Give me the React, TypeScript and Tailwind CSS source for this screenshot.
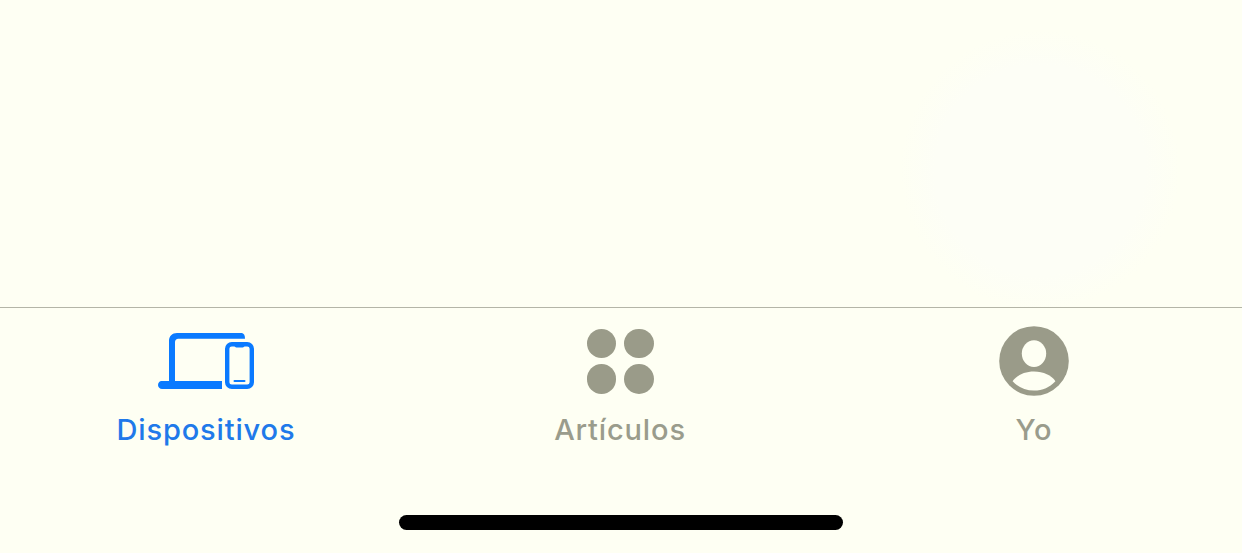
import React from 'react';

const DevicesIcon = () => (
  <svg width="96" height="56" viewBox="0 0 96 56" fill="none">
    <path d="M84 0H19C14.2 0 11 3.2 11 8V48H17V9C17 7 18.4 5.7 20.3 5.7H87C87 2.5 86 0.5 84 0Z" fill="#0a7aff" />
    <path d="M3.5 48H64V56H4C1.8 56 0 54.2 0 52C0 49.8 1.5 48 3.5 48Z" fill="#0a7aff" />
    <rect x="69.2" y="11.2" width="24.6" height="42.6" rx="4.6" stroke="#0a7aff" strokeWidth="4.4" />
    <path d="M76.5 11H86.5V12.5C86.5 13.6 85.7 14.4 84.6 14.4H78.4C77.3 14.4 76.5 13.6 76.5 12.5Z" fill="#0a7aff" />
    <rect x="75.5" y="47" width="12" height="2" rx="1" fill="#0a7aff" />
  </svg>
);

const GridIcon = () => (
  <div className="grid grid-cols-2 gap-x-[8px] gap-y-[6px] w-[67px]">
    <div className="w-[29.5px] h-[29.5px] rounded-full bg-[#9a9b89]" />
    <div className="w-[29.5px] h-[29.5px] rounded-full bg-[#9a9b89]" />
    <div className="w-[29.5px] h-[29.5px] rounded-full bg-[#9a9b89]" />
    <div className="w-[29.5px] h-[29.5px] rounded-full bg-[#9a9b89]" />
  </div>
);

const PersonIcon = () => (
  <svg width="70" height="70" viewBox="0 0 70 70">
    <circle cx="35" cy="35" r="34.8" fill="#9a9b89" />
    <ellipse cx="35" cy="27.6" rx="12.2" ry="13.3" fill="#feffF3" />
    <path d="M13.6 55.3C17.5 49.5 25.5 45.6 35 45.6C44.5 45.6 52.5 49.5 56.4 55.3C51 61.3 43.5 64.6 35 64.6C26.5 64.6 19 61.3 13.6 55.3Z" fill="#feffF3" />
  </svg>
);

const tabs = [
  { label: 'Dispositivos', icon: <DevicesIcon />, color: 'text-[#2079ea]' },
  { label: 'Artículos', icon: <GridIcon />, color: 'text-[#9a9c8c]' },
  { label: 'Yo', icon: <PersonIcon />, color: 'text-[#9a9c8c]' },
];

export default function App() {
  return (
    <div className="h-[553px] w-full overflow-hidden flex flex-col bg-[#feffF3] font-['Inter',sans-serif]">
      <div className="h-[307px] shrink-0 bg-[radial-gradient(circle_at_1040px_170px,#fdfef6_0,#fdfef6_105px,#feffF3_140px)]" />
      <div className="h-px shrink-0 bg-[#b4b5a7]" />
      <div className="grid grid-cols-3 pt-[18px]">
        {tabs.map((tab) => (
          <div key={tab.label} className="flex flex-col items-center pr-[2px]">
            <div className="h-[70px] flex items-center justify-center">{tab.icon}</div>
            <span className={`mt-[16px] text-[29px] leading-[36px] font-medium tracking-[0.85px] ${tab.color}`}>
              {tab.label}
            </span>
          </div>
        ))}
      </div>
      <div className="flex-1 flex justify-center">
        <div className="mt-[67px] w-[444px] h-[15px] rounded-full bg-black" />
      </div>
    </div>
  );
}
